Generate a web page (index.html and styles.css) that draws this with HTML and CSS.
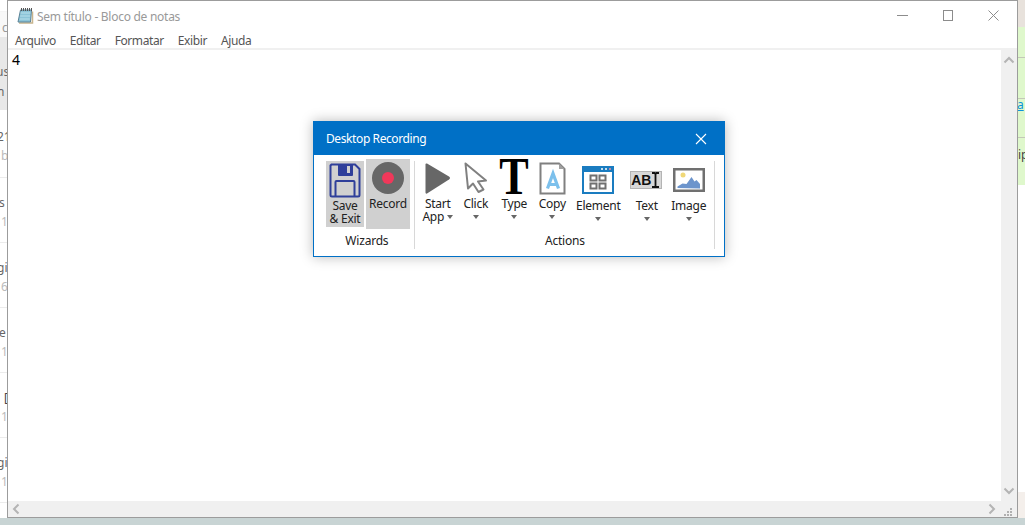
FILE: index.html
```html
<!DOCTYPE html>
<html lang="pt">
<head>
<meta charset="utf-8">
<title>Desktop Recording</title>
<link rel="stylesheet" href="styles.css">
</head>
<body>
<div class="desktop">
  <div class="bg-left">
    <div class="bl-top"><span class="bl-c">c</span></div>
    <div class="bl-grey"><span class="us">us</span><span>n</span></div>
    <div class="bl-row r1"><span class="a shift">21</span><span class="b">b</span></div>
    <div class="bl-row"><span class="a">s</span><span class="b">1</span></div>
    <div class="bl-row"><span class="a shift">gi</span><span class="b">6</span></div>
    <div class="bl-row"><span class="a">e</span><span class="b">1</span></div>
    <div class="bl-row"><span class="a bracket">[</span><span class="b">1</span></div>
    <div class="bl-row"><span class="a shift">gi</span><span class="b">1</span></div>
  </div>
  <div class="bg-right">
    <div class="br-beige"></div>
    <div class="br-green h31"></div>
    <div class="br-green h41"></div>
    <div class="br-green h39"><span class="br-link">a</span></div>
    <div class="br-green h47"><span class="br-text">ip</span></div>
    <div class="br-white"></div>
    <div class="br-pink"></div>
  </div>
  <div class="bg-bottom"></div>

  <main class="notepad">
    <header class="np-title">
      <svg class="np-icon" width="17" height="17" viewBox="0 0 17 17">
        <path d="M15.500 4.500v11.500H2" fill="none" stroke="#c8b48c" stroke-width="1.500"/>
        <path d="M3.500 3h11l-1 12H1z" fill="#8cc4d8" stroke="#5a8296"/>
        <path d="M3.500 6h10M3.200 9h10M2.800 12h10" stroke="#b8e0ec" stroke-width="1"/>
        <path d="M4.500 1v3M6.500 1v3M8.500 1v3M10.500 1v3M12.500 1v3M14.500 1v3" stroke="#555" stroke-width="1"/>
      </svg>
      <span class="np-name">Sem título - Bloco de notas</span>
      <div class="np-controls">
        <span class="ctl-min"></span>
        <span class="ctl-max"></span>
        <svg class="ctl-close" width="11" height="11" viewBox="0 0 11 11"><path d="M.5.500l10 10M10.500.500l-10 10" stroke="#8c8c8c" fill="none"/></svg>
      </div>
    </header>
    <nav class="np-menu">
      <span>Arquivo</span><span>Editar</span><span>Formatar</span><span>Exibir</span><span>Ajuda</span>
    </nav>
    <div class="np-body">
      <div class="np-main">
        <div class="np-text">4</div>
        <div class="vscroll">
          <svg width="12" height="8" viewBox="0 0 12 8"><path d="M1.500 6.500L6 2l4.500 4.500" fill="none" stroke="#b4b4b4" stroke-width="2"/></svg>
          <svg width="12" height="8" viewBox="0 0 12 8"><path d="M1.500 1.500L6 6l4.500-4.500" fill="none" stroke="#b4b4b4" stroke-width="2"/></svg>
        </div>
      </div>
      <div class="hscroll">
        <svg width="8" height="12" viewBox="0 0 8 12"><path d="M6.500 1.500L2 6l4.500 4.500" fill="none" stroke="#b4b4b4" stroke-width="2"/></svg>
        <svg width="8" height="12" viewBox="0 0 8 12"><path d="M1.500 1.500L6 6l-4.500 4.500" fill="none" stroke="#b4b4b4" stroke-width="2"/></svg>
        <div class="grip">
          <svg width="10" height="10" viewBox="0 0 10 10"><path d="M7 1h2v2H7zM4 4h2v2H4zM7 4h2v2H7zM1 7h2v2H1zM4 7h2v2H4zM7 7h2v2H7z" fill="#b0b0b0"/></svg>
        </div>
      </div>
    </div>
  </main>

  <section class="dialog">
    <header class="dlg-title">
      <span>Desktop Recording</span>
      <svg width="12" height="12" viewBox="0 0 12 12"><path d="M1 1l10 10M11 1L1 11" stroke="#fff" stroke-width="1.100" fill="none"/></svg>
    </header>
    <div class="dlg-body">
      <div class="group wizards">
        <div class="group-items">
          <button class="tool save">
            <span class="icon i-save">
              <svg width="32" height="35" viewBox="0 0 32 35">
                <path d="M2.500 1.500H26l4.500 4.500v26q0 1.500-1.500 1.500H3q-1.500 0-1.500-1.500V2.500z" fill="none" stroke="#2f3f9a" stroke-width="2"/>
                <path d="M9 2h15v10q0 1-1 1H10q-1 0-1-1z" fill="#2f3f9a"/>
                <path d="M18 3h3v7h-3z" fill="#d0d0d0"/>
                <path d="M6.500 33V19q0-1 1-1h17q1 0 1 1v14" fill="none" stroke="#2f3f9a" stroke-width="2"/>
              </svg>
            </span>
            <span class="label">Save<br>&amp; Exit</span>
          </button>
          <button class="tool record">
            <span class="icon i-record">
              <svg width="32" height="32" viewBox="0 0 32 32"><circle cx="16" cy="16" r="16" fill="#676767"/><circle cx="16" cy="16" r="6" fill="#f0385a"/></svg>
            </span>
            <span class="label">Record</span>
          </button>
        </div>
        <div class="group-label">Wizards</div>
      </div>
      <div class="group actions">
        <div class="group-items">
          <button class="tool w38">
            <span class="icon i-top">
              <svg width="26" height="33" viewBox="0 0 26 33"><path d="M2 1.500L24 14.500q2 1.500 0 3L2 31.500q-1.500.500-1.500-1V2.500q0-1.500 1.500-1z" fill="#676767"/></svg>
            </span>
            <span class="label">Start<br><span class="with-caret">App<i class="caret inline"></i></span></span>
          </button>
          <button class="tool w38">
            <span class="icon i-top">
              <svg width="24" height="32" viewBox="0 0 24 32"><path d="M1.500 1.500L22 18.500l-8 1 5.500 8-5 2.500-5.500-8.500-5 5z" fill="#fff" stroke="#808080" stroke-width="2" stroke-linejoin="round"/></svg>
            </span>
            <span class="label">Click</span>
            <i class="caret"></i>
          </button>
          <button class="tool w39">
            <span class="icon i-t"><span class="big-t">T</span></span>
            <span class="label">Type</span>
            <i class="caret"></i>
          </button>
          <button class="tool w37">
            <span class="icon i-top">
              <svg width="27" height="33" viewBox="0 0 27 33">
                <path d="M1.500 1.500H20L25.500 7v24.500H1.500z" fill="#fff" stroke="#808080" stroke-width="2"/>
                <path d="M20 1.500V7h5.500z" fill="#a0a0a0"/>
                <path d="M8.500 26.500L14 11.500l5.500 15M10.500 22.500h7" fill="none" stroke="#7cc0ec" stroke-width="3.200"/>
              </svg>
            </span>
            <span class="label">Copy</span>
            <i class="caret"></i>
          </button>
          <button class="tool w54 low">
            <span class="icon i-low">
              <svg width="32" height="28" viewBox="0 0 32 28">
                <path d="M0 0h32v28H0z" fill="#1a7cc0"/>
                <path d="M2 6h28v20H2z" fill="#fff"/>
                <circle cx="20" cy="3" r="1" fill="#fff"/><circle cx="24" cy="3" r="1" fill="#fff"/><circle cx="28" cy="3" r="1" fill="#f08ca0"/>
                <path d="M8.500 9.500h6v5h-6zM17.500 9.500h6v5h-6zM8.500 17.500h6v5h-6zM17.500 17.500h6v5h-6z" fill="#fff" stroke="#707070" stroke-width="2"/>
              </svg>
            </span>
            <span class="label">Element</span>
            <i class="caret"></i>
          </button>
          <button class="tool w44 low">
            <span class="icon i-low">
              <span class="abi"><span class="abi-text">AB</span><svg width="9" height="16" viewBox="0 0 9 16"><path d="M1 1h2.500l1 1 1-1H8M1 15h2.500l1-1 1 1H8M4.500 2v12" fill="none" stroke="#111" stroke-width="1.800"/></svg></span>
            </span>
            <span class="label">Text</span>
            <i class="caret"></i>
          </button>
          <button class="tool w40 low">
            <span class="icon i-low image">
              <svg width="32" height="24" viewBox="0 0 32 24">
                <path d="M1.250 1.250h29.500v21.500H1.250z" fill="#fff" stroke="#707070" stroke-width="2.500"/>
                <circle cx="10" cy="7" r="2.500" fill="#f0d878"/>
                <path d="M4.500 20v-1.500l5-3 4 .500 5-7 3 4.500 2-1.500 3.500 4v4.500z" fill="#6c94cc"/>
              </svg>
            </span>
            <span class="label">Image</span>
            <i class="caret"></i>
          </button>
        </div>
        <div class="group-label">Actions</div>
      </div>
    </div>
  </section>
</div>
</body>
</html>
```
FILE: styles.css
```css
* { box-sizing: border-box; }
html, body { margin: 0; padding: 0; }
body { width: 1025px; height: 525px; overflow: hidden; font-family: "Noto Sans", "Open Sans", sans-serif; }
.desktop { position: relative; width: 1025px; height: 525px; background: #fff; overflow: hidden; }

/* Desktop fragments behind the windows */
.bg-left { position: absolute; left: 0; top: 0; width: 8px; height: 518px; display: flex; flex-direction: column; overflow: hidden; font-size: 12px; color: #555; white-space: nowrap; }
.bl-top { height: 38px; background: linear-gradient(#fff 11px, #f0f0f0 11px, #f8f8f8 12px); padding-top: 20px; color: #999; line-height: 16px; border-bottom: 1px solid #e8e8e8; }
.bl-c { display: block; margin-left: 2px; }
.bl-grey { height: 72px; background: #e8e8e8; display: flex; flex-direction: column; padding-top: 24px; line-height: 20px; color: #666; }
.bl-grey span { margin-left: -3px; }
.bl-grey .us { margin-left: -4px; }
.bl-row { height: 65px; border-bottom: 1px solid #ececec; display: flex; flex-direction: column; padding-top: 15px; line-height: 19px; }
.bl-row.r1 { height: 68px; padding-top: 17px; }
.bl-row .a { margin-left: -1px; color: #666; }
.bl-row .a.shift { margin-left: -3px; }
.bl-row .a.bracket { margin-left: 4px; color: #444; }
.bl-row .b { margin-left: 1px; color: #bbb; }

.bg-right { position: absolute; left: 1018px; top: 0; width: 7px; height: 518px; display: flex; flex-direction: column; overflow: hidden; font-size: 12px; }
.br-beige { height: 27px; background: #e8e2dc; }
.br-green { background: #dff8cc; border-bottom: 1px solid #c4c8b8; position: relative; }
.h31 { height: 31px; }
.h41 { height: 41px; }
.h39 { height: 39px; }
.h47 { height: 47px; border-bottom: 0; }
.br-link { position: absolute; left: -1px; top: -3px; line-height: 18px; color: #0a94dc; text-decoration: underline; }
.br-text { position: absolute; left: 0; top: 8px; line-height: 18px; color: #444; }
.br-white { height: 307px; background: #fff; }
.br-pink { flex: 1; background: #f4efeb; }
.bg-bottom { position: absolute; left: 0; top: 518px; width: 1025px; height: 7px; background: #c8d4d4; }

/* Notepad window */
.notepad { position: absolute; left: 7px; top: 0; width: 1011px; height: 518px; background: #fff; border: 1px solid #9c9c9c; display: flex; flex-direction: column; }
.np-title { height: 29px; display: flex; align-items: center; padding-left: 9px; flex: none; }
.np-icon { flex: none; margin-top: -1px; }
.np-name { margin-left: 3px; font-size: 12px; letter-spacing: -.27px; color: #999; padding-top: 2px; }
.np-controls { margin-left: auto; display: flex; align-items: center; padding-right: 18px; margin-top: -1px; }
.ctl-min { width: 11px; height: 1px; background: #8c8c8c; }
.ctl-max { width: 10px; height: 11px; border: 1px solid #8c8c8c; margin-left: 35px; }
.ctl-close { margin-left: 35px; }
.np-menu { height: 20px; flex: none; display: flex; align-items: center; padding: 3px 0 0 7px; gap: 14px; font-size: 12px; letter-spacing: -.4px; color: #555; border-bottom: 2px solid #f0f0f0; }
.np-body { flex: 1; display: flex; flex-direction: column; min-height: 0; }
.np-main { flex: 1; display: flex; min-height: 0; }
.np-text { flex: 1; padding: 1px 0 0 4px; font-size: 14px; line-height: 18px; color: #000; }
.vscroll { width: 16px; flex: none; background: #f0f0f0; display: flex; flex-direction: column; justify-content: space-between; align-items: center; padding: 6px 0; }
.hscroll { height: 16px; flex: none; background: #f0f0f0; display: flex; align-items: center; padding-left: 4px; }
.hscroll svg:nth-child(2) { margin-left: 968px; }
.grip { margin-left: 7px; height: 16px; display: flex; align-items: flex-end; }

/* Recording dialog */
.dialog { position: absolute; left: 313px; top: 121px; width: 412px; height: 136px; background: #fff; border: 1px solid #0070c6; box-shadow: 0 0 12px rgba(0,0,0,.28); display: flex; flex-direction: column; }
.dlg-title { height: 33px; flex: none; background: #0070c6; color: #fff; font-size: 12px; letter-spacing: -.4px; display: flex; align-items: center; justify-content: space-between; padding: 0 17px 0 12px; }
.dlg-body { flex: 1; display: flex; padding: 4px 9px 0 12px; }
.group { display: flex; flex-direction: column; position: relative; margin-bottom: 11px; }
.group::after { content: ""; position: absolute; right: 0; top: 2px; bottom: 0; width: 1px; background: #d8d8d8; }
.wizards { width: 89px; }
.actions { width: 301px; padding-left: 4px; }
.group-items { display: flex; align-items: flex-start; flex: none; height: 72px; }
.group-label { font-size: 12px; letter-spacing: -.2px; line-height: 16px; text-align: center; color: #222; margin-top: 2px; }
.wizards .group-label { padding-right: 7px; }
.actions .group-label { padding-right: 4px; }

.tool { appearance: none; border: 0; background: none; padding: 0; margin: 0; font: inherit; font-size: 12px; letter-spacing: -.25px; color: #222; display: flex; flex-direction: column; align-items: center; }
.label { line-height: 13px; display: block; text-align: center; }
.icon { display: flex; justify-content: center; align-items: flex-start; }
.save { width: 38px; height: 66px; background: #d0d0d0; margin-top: 2px; }
.i-save { height: 38px; padding-top: 2px; }
.record { width: 44px; height: 70px; background: #d0d0d0; margin-left: 2px; }
.i-record { height: 38px; padding-top: 3px; }
.w38 { width: 38px; }
.w39 { width: 39px; }
.w37 { width: 37px; }
.w54 { width: 54px; padding-left: 1px; }
.w44 { width: 44px; }
.w40 { width: 40px; }
.i-top { height: 38px; padding-top: 3px; }
.i-t { height: 38px; padding-top: 1px; overflow: visible; }
.i-low { height: 40px; padding-top: 7px; }
.i-low.image { padding-top: 9px; }
.big-t { font-family: "Liberation Serif", serif; font-weight: 700; font-size: 48px; line-height: 34px; height: 34px; color: #000; transform: scale(.92, 1.08); }
.abi { width: 32px; height: 18px; margin: 5px 2px 0 0; background: #d8d8d8; border: 1px solid #b4b4b4; display: flex; align-items: center; justify-content: center; }
.abi-text { font-family: "Liberation Sans", sans-serif; font-weight: 700; font-size: 14px; letter-spacing: 0; color: #111; }
.caret { display: block; width: 0; height: 0; border-left: 3.500px solid transparent; border-right: 3.500px solid transparent; border-top: 4px solid #666; margin-top: 5px; }
.caret.inline { display: inline-block; margin: 0 0 2px 3px; vertical-align: middle; }
.with-caret { white-space: nowrap; }
```
